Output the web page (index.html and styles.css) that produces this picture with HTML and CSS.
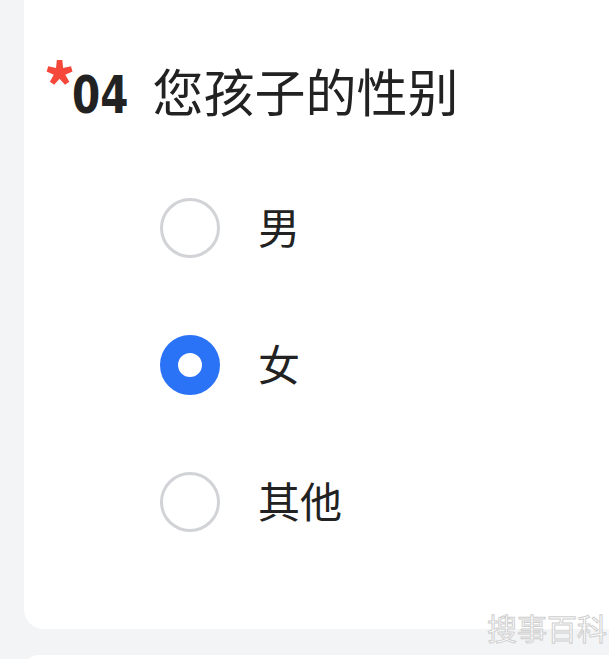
FILE: index.html
```html
<!DOCTYPE html>
<html lang="zh-CN">
<head>
<meta charset="utf-8">
<link rel="stylesheet" href="styles.css">
</head>
<body>
<div class="page">
  <section class="card">
    <h2 class="title"><span class="req">*</span><span class="num">04</span><span class="text">您孩子的性别</span></h2>
    <ul class="options">
      <li class="option"><span class="radio"></span><span class="label">男</span></li>
      <li class="option"><span class="radio checked"></span><span class="label">女</span></li>
      <li class="option"><span class="radio"></span><span class="label">其他</span></li>
    </ul>
    <div class="watermark">搜事百科</div>
  </section>
  <section class="card next"></section>
</div>
</body>
</html>
```
FILE: styles.css
```css
html, body {
  margin: 0;
  padding: 0;
  background: #f3f4f6;
  overflow: hidden;
}
body {
  width: 609px;
  height: 659px;
  font-family: "Noto Sans CJK SC", "Noto Sans", sans-serif;
  color: #222;
}
.page {
  display: flex;
  flex-direction: column;
  gap: 26px;
  height: 659px;
  overflow: hidden;
}
.card {
  position: relative;
  background: #fff;
  border-radius: 20px;
  margin: -20px -30px 0 24px;
  padding: 86px 0 0 23px;
  height: 649px;
  box-sizing: border-box;
  flex: none;
}
.card.next {
  margin-top: 0;
  height: 30px;
  padding: 0;
}
.title {
  margin: 0;
  display: flex;
  align-items: flex-start;
  font-weight: 400;
  line-height: 1;
  height: 56px;
}
.req {
  color: #f5483b;
  font-family: "Noto Sans CJK SC", sans-serif;
  font-weight: 900;
  font-size: 58px;
  line-height: 1;
  margin-top: -13px;
  width: 25px;
  display: flex;
  justify-content: center;
}
.num {
  display: inline-block;
  font-family: "DejaVu Sans", sans-serif;
  font-weight: 700;
  font-size: 52px;
  line-height: 1;
  letter-spacing: 0;
  margin-top: 3px;
  color: #222;
  transform: scaleX(0.78);
  transform-origin: left center;
  margin-right: -16px;
}
.text {
  font-size: 51px;
  margin-left: 24px;
  line-height: 1;
  margin-top: -1px;
}
.options {
  list-style: none;
  margin: 0;
  padding: 76px 0 0 113px;
  display: flex;
  flex-direction: column;
  gap: 77px;
}
.option {
  display: flex;
  align-items: center;
  height: 60px;
}
.radio {
  width: 60px;
  height: 60px;
  box-sizing: border-box;
  border: 3px solid #d1d3d7;
  border-radius: 50%;
  flex: none;
}
.radio.checked {
  border: 18px solid #2a72f6;
  background: #fff;
}
.label {
  font-size: 42px;
  margin-left: 38px;
  line-height: 1;
  margin-top: -4px;
}
.watermark {
  position: absolute;
  right: 32px;
  bottom: -13px;
  font-size: 30px;
  line-height: 1;
  color: rgba(255, 255, 255, 0.7);
  -webkit-text-stroke: 1px #cfcfcf;
}
```
